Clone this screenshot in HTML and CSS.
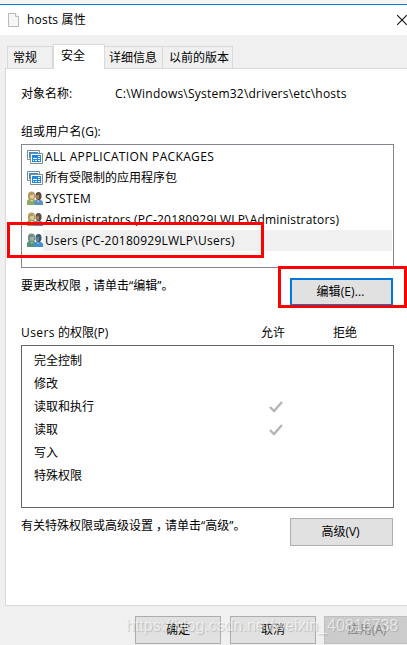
FILE: index.html
```html
<!DOCTYPE html>
<html lang="zh-CN">
<head>
  <meta charset="UTF-8" />
  <meta name="viewport" content="width=device-width, initial-scale=1.0" />
  <title>hosts 属性</title>
  <link rel="stylesheet" href="styles.css">
</head>
<body>

  <!-- 图标定义 -->
  <svg class="defs" width="0" height="0">
    <symbol id="pkg" viewBox="0 0 16 14">
      <path d="M.5 .5h12v9H.5z" fill="#fff" stroke="#7f8b94"/>
      <path d="M2 2h9v6H2z" fill="#2f8fdc"/>
      <path d="M3.500 3.500h12v10h-12z" fill="#fff" stroke="#7f8b94"/>
      <path d="M5 5h9v7H5z" fill="#2089dc"/>
      <path d="M6 8h4v1H6zM11 6h2v1h-2zM11 8h2v1h-2zM6 10h1v1H6zM8 10h2v1H8zM11 10h2v1h-2z" fill="#fff"/>
    </symbol>
    <symbol id="people" viewBox="0 0 16 15">
      <path d="M0 14V11q0-3 3-3h3q3 0 3 3v3z" fill="#8faa62"/>
      <path d="M1 4q0-3.500 3.500-3.500T8 4v3q-1 2-3.500 2T1 7z" fill="#b59a5c"/>
      <path d="M3 4q2 1 4-1v3q0 2-2 2T3 6z" fill="#e3c8a0"/>
      <path d="M3.500 9l1.500 2 1-2z" fill="#d3e2bb"/>
      <path d="M7 14v-2q0-3 3-3h3q3 0 3 3v2z" fill="#5d91c1"/>
      <path d="M8.500 4.500Q8.500 1 11.500 1t3 3.500v2q-1 3-3 3t-3-3z" fill="#594a42"/>
      <path d="M9 4.500q2 0 3-1.500v4q-1 2-2 1.500T9 6z" fill="#a97e60"/>
      <path d="M10 9.500l1 2 1.500-2z" fill="#c4dcf0"/>
    </symbol>
    <symbol id="people-sel" viewBox="0 0 16 15">
      <path d="M0 14V11q0-3 3-3h3q3 0 3 3v3z" fill="#559479"/>
      <path d="M1 4q0-3.500 3.500-3.500T8 4v3q-1 2-3.500 2T1 7z" fill="#6f8c82"/>
      <path d="M3 4q2 1 4-1v3q0 2-2 2T3 6z" fill="#98b3b0"/>
      <path d="M3.500 9l1.500 2 1-2z" fill="#a3ccc6"/>
      <path d="M7 14v-2q0-3 3-3h3q3 0 3 3v2z" fill="#438fcb"/>
      <path d="M8.500 4.500Q8.500 1 11.500 1t3 3.500v2q-1 3-3 3t-3-3z" fill="#385873"/>
      <path d="M9 4.500q2 0 3-1.500v4q-1 2-2 1.500T9 6z" fill="#65849a"/>
      <path d="M10 9.500l1 2 1.500-2z" fill="#94c6ea"/>
    </symbol>
    <symbol id="check" viewBox="0 0 14 12">
      <path d="M1 6l4 4L13 1" fill="none" stroke="#b4b4b4" stroke-width="2.300"/>
    </symbol>
  </svg>

  <div class="titlebar">
    <svg class="file-icon" width="11" height="14" viewBox="0 0 11 14">
      <path d="M.5 .5h7l3 3v10H.5z" fill="#f6f7f6" stroke="#b9bbb9"/>
      <path d="M7.500 .5v3h3" fill="#fff" stroke="#b9bbb9"/>
    </svg>
    <h1>hosts 属性</h1>
    <svg class="close" width="10" height="10" viewBox="0 0 10 10">
      <path d="M0 0l10 10M10 0L0 10" stroke="#111" stroke-width="1.100"/>
    </svg>
  </div>

  <main>
    <div class="tabs">
      <div class="tab tab-general">常规</div>
      <div class="tab active">安全</div>
      <div class="tab tab-details">详细信息</div>
      <div class="tab tab-versions">以前的版本</div>
    </div>

    <div class="panel">
      <div class="object">
        <span class="object-label">对象名称:</span>
        <span class="path">C:\Windows\System32\drivers\etc\hosts</span>
      </div>

      <div class="group-label">组或用户名(G):</div>
      <ul class="users">
        <li><svg class="pkg"><use href="#pkg"/></svg><span class="caps">ALL APPLICATION PACKAGES</span></li>
        <li><svg class="pkg"><use href="#pkg"/></svg><span>所有受限制的应用程序包</span></li>
        <li><svg class="people"><use href="#people"/></svg><span class="caps">SYSTEM</span></li>
        <li><svg class="people"><use href="#people"/></svg><span class="admins">Administrators (PC-20180929LWLP\Administrators)</span></li>
        <li class="selected"><svg class="people"><use href="#people-sel"/></svg><span>Users (PC-20180929LWLP\Users)</span></li>
      </ul>

      <div class="action edit-row">
        <span>要更改权限<span class="comma">，</span>请单击“编辑”。</span>
        <button class="btn focus">编辑(E)...</button>
      </div>

      <div class="perm-head">
        <span><span class="perm-user">Users</span> 的权限(P)</span>
        <span>允许</span>
        <span>拒绝</span>
      </div>
      <div class="perms">
        <div class="perm"><span>完全控制</span></div>
        <div class="perm"><span>修改</span></div>
        <div class="perm"><span>读取和执行</span><svg class="check"><use href="#check"/></svg></div>
        <div class="perm"><span>读取</span><svg class="check"><use href="#check"/></svg></div>
        <div class="perm"><span>写入</span></div>
        <div class="perm"><span>特殊权限</span></div>
      </div>

      <div class="action advanced-row">
        <span>有关特殊权限或高级设置<span class="comma">，</span>请单击“高级”。</span>
        <button class="btn">高级(V)</button>
      </div>
    </div>

    <div class="footer">
      <button class="btn">确定</button>
      <button class="btn">取消</button>
      <button class="btn" disabled>应用(A)</button>
    </div>
  </main>

  <!-- 标注框和水印 -->
  <div class="mark mark-users"></div>
  <div class="mark mark-edit"></div>
  <div class="watermark">https://blog.csdn.net/weixin_40816738</div>

</body>
</html>
```
FILE: styles.css
```css
* {
  box-sizing: border-box;
}

html, body {
  margin: 0;
  padding: 0;
  width: 407px;
  height: 645px;
  overflow: hidden;
}

body {
  position: relative;
  font: 12px/16px "Open Sans", "Noto Sans CJK SC", sans-serif;
  color: #000;
  background-color: #f0f0f0;
  white-space: nowrap;
}

.defs {
  display: block;
}

.titlebar {
  display: flex;
  align-items: center;
  height: 35px;
  padding: 0 0 0 8px;
  border-top: 4px solid #f5f5f5;
  background: linear-gradient(#0078d7 1px, #fff 1px);
}

.titlebar h1 {
  flex: 1;
  margin: 0 0 0 8px;
  font-size: 12px;
  font-weight: normal;
  letter-spacing: 0.2px;
}

.tabs {
  display: flex;
  align-items: flex-end;
  height: 33px;
  padding-left: 7px;
}

.tab {
  height: 22px;
  padding: 3px 0 0 5px;
  border: 1px solid #d9d9d9;
  border-bottom: 0;
  border-left: 0;
}

.tab-general {
  width: 46px;
  border-left: 1px solid #d9d9d9;
}

.tab-details {
  width: 58px;
  padding-left: 4px;
}

.tab-versions {
  width: 70px;
  padding-left: 6px;
}

.tab.active {
  position: relative;
  z-index: 1;
  width: 52px;
  height: 25px;
  margin-bottom: -1px;
  padding: 3px 0 0 7px;
  border-left: 1px solid #d9d9d9;
  background-color: #fff;
}

.panel {
  height: 538px;
  margin: 0 -1px 0 5px;
  padding: 17px 13px 0 15px;
  border: 1px solid #d9d9d9;
  background-color: #fff;
}

.object {
  display: flex;
}

.object-label {
  width: 94px;
}

.path {
  letter-spacing: 0.22px;
}

.group-label {
  margin-top: 22px;
  letter-spacing: 0.1px;
}

.users {
  height: 124px;
  margin: 4px 0 0;
  padding: 1px 1px 0 5px;
  border: 1px solid #828790;
  list-style: none;
}

.users li {
  display: flex;
  align-items: center;
  height: 21px;
}

.users span {
  flex: 1;
  height: 21px;
  padding-left: 2px;
  line-height: 21px;
}

.users .caps {
  letter-spacing: 0.35px;
}

.users .admins {
  letter-spacing: 0.19px;
}

.users .selected span {
  background-color: #f0f0f0;
  letter-spacing: 0.25px;
}

.pkg {
  width: 16px;
  height: 14px;
}

.people {
  width: 16px;
  height: 15px;
}

.action {
  display: flex;
  justify-content: space-between;
  padding-right: 1px;
}

.edit-row {
  height: 38px;
  padding-top: 10px;
}

.comma {
  position: relative;
  left: 3px;
}

.btn {
  width: 103px;
  height: 28px;
  padding: 0 2px 0 0;
  border: 1px solid #adadad;
  background-color: #e1e1e1;
  font: inherit;
  color: #000;
}

.btn.focus {
  border: 2px solid #0078d7;
  letter-spacing: 0.1px;
}

.btn:disabled {
  border-color: #bfbfbf;
  background-color: #ccc;
  color: #838383;
}

.perm-head {
  display: grid;
  grid-template-columns: 240px 72px 1fr;
  margin-top: 19px;
}

.perm-user {
  letter-spacing: 0.4px;
}

.perms {
  height: 163px;
  margin-top: 4px;
  padding: 3px 0 0 12px;
  border: 1px solid #646464;
}

.perm {
  display: grid;
  grid-template-columns: 235px 1fr;
  align-items: center;
  height: 23px;
}

.check {
  width: 14px;
  height: 12px;
}

.advanced-row {
  padding-top: 10px;
}

.footer {
  display: flex;
  gap: 9px;
  padding: 10px 0 0 135px;
}

.footer .btn {
  flex: none;
  width: 86px;
  padding: 0;
}

.footer .btn:disabled {
  margin-left: -1px;
}

.mark {
  position: absolute;
  border: 3px solid #f00;
}

.mark-users {
  left: 7px;
  top: 222px;
  width: 257px;
  height: 36px;
}

.mark-edit {
  left: 278px;
  top: 266px;
  width: 129px;
  height: 42px;
}

.watermark {
  position: absolute;
  left: 126px;
  top: 617px;
  font: 16px/18px "Liberation Sans", sans-serif;
  color: rgba(255, 255, 255, 0.6);
  text-shadow: 1px 1px 1px rgba(120, 120, 120, 0.35);
}
```
